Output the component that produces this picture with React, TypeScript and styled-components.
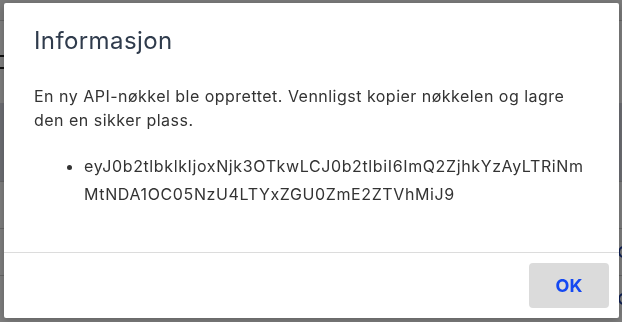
import React from "react";
import styled, { createGlobalStyle } from "styled-components";

const GlobalStyle = createGlobalStyle`
  html, body { margin: 0; padding: 0; }
  body {
    width: 622px;
    height: 322px;
    overflow: hidden;
    background: #ffffff;
    font-family: Inter, "Noto Sans", "Liberation Sans", sans-serif;
  }
`;

const Page = styled.div`
  width: 622px;
  height: 322px;
  display: flex;
  flex-direction: column;
  background: #ffffff;
`;

const PageHeader = styled.div`
  height: 21px;
  background: #f6f6f6;
  border-bottom: 1px solid #cfcfcf;
`;

const PageLabelRow = styled.div`
  height: 88px;
  display: flex;
  align-items: center;
`;

const PageMark = styled.span`
  width: 8px;
  height: 10px;
  margin-left: -5px;
  border: 2px solid #222;
  border-radius: 2px;
`;

const PageBand = styled.div`
  height: 83px;
  background: #dcdee8;
`;

const PageRow = styled.div`
  height: 49px;
  border-top: 1px solid #d0d0d0;
  display: flex;
  justify-content: flex-end;
  align-items: center;
`;

const RowIcon = styled.span`
  width: 8px;
  height: 8px;
  border: 2px solid #1b3ea8;
  border-radius: 50%;
  margin-right: -8px;
`;

const Overlay = styled.div`
  position: fixed;
  inset: 0;
  background: rgba(0, 0, 0, 0.5);
  display: flex;
  padding: 3px 3px 4px 4px;
`;

const Dialog = styled.div`
  flex: 1;
  display: flex;
  flex-direction: column;
  background: #ffffff;
  border-radius: 2px;
  box-shadow: 0 2px 10px rgba(0, 0, 0, 0.25);
`;

const Header = styled.div`
  padding: 23px 30px 0;
`;

const Title = styled.h2`
  margin: 0;
  font-size: 24px;
  line-height: 29px;
  font-weight: 400;
  letter-spacing: 0.4px;
  color: #2f3b4c;
`;

const Body = styled.div`
  flex: 1;
  padding: 29px 30px 0;
  color: #333333;
`;

const Text = styled.p`
  margin: 0;
  font-size: 16px;
  line-height: 24px;
  letter-spacing: 0.48px;
`;

const KeyList = styled.ul`
  margin: 20px 0 0;
  padding-left: 50px;
`;

const KeyItem = styled.li`
  font-size: 16px;
  line-height: 28px;
  letter-spacing: 0.62px;
  word-break: break-all;
  color: #333333;
`;

const Footer = styled.div`
  border-top: 1px solid #dcdcdc;
  padding: 10px;
  display: flex;
  justify-content: flex-end;
`;

const OkButton = styled.button`
  width: 80px;
  height: 45px;
  border: none;
  border-radius: 4px;
  background: #dbdbdb;
  color: #1448f2;
  font-family: Inter, "Noto Sans", "Liberation Sans", sans-serif;
  font-size: 18px;
  font-weight: 700;
  cursor: pointer;
`;

export default function App() {
  return (
    <>
      <GlobalStyle />
      <Page>
        <PageHeader />
        <PageLabelRow>
          <PageMark />
        </PageLabelRow>
        <PageBand />
        <PageRow />
        <PageRow>
          <RowIcon />
        </PageRow>
        <PageRow>
          <RowIcon />
        </PageRow>
      </Page>
      <Overlay>
        <Dialog role="dialog" aria-labelledby="dlg-title">
          <Header>
            <Title id="dlg-title">Informasjon</Title>
          </Header>
          <Body>
            <Text>
              En ny API-nøkkel ble opprettet. Vennligst kopier nøkkelen og lagre den en sikker plass.
            </Text>
            <KeyList>
              <KeyItem>
                eyJ0b2tlbklkIjoxNjk3OTkwLCJ0b2tlbiI6ImQ2ZjhkYzAyLTRiNmMtNDA1OC05NzU4LTYxZGU0ZmE2ZTVhMiJ9
              </KeyItem>
            </KeyList>
          </Body>
          <Footer>
            <OkButton>OK</OkButton>
          </Footer>
        </Dialog>
      </Overlay>
    </>
  );
}
